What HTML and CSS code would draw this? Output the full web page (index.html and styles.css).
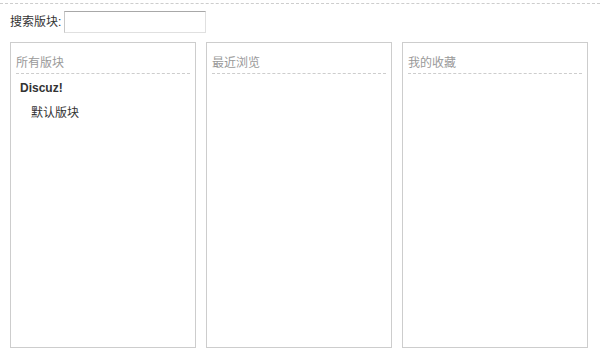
FILE: index.html
```html
<!DOCTYPE html>
<html lang="zh-CN">
  <head>
    <meta charset="UTF-8" />
    <title>选择版块</title>
    <link rel="stylesheet" href="styles.css">
  </head>
  <body>
    <div class="topline"></div>

    <div class="search">
      <label for="srchforum">搜索版块:</label>
      <input type="text" id="srchforum" class="px" />
    </div>

    <div class="columns">
      <div class="col">
        <h3>所有版块</h3>
        <ul class="forums">
          <li class="group">Discuz!</li>
          <li class="sub">默认版块</li>
        </ul>
      </div>
      <div class="col">
        <h3>最近浏览</h3>
        <ul class="forums"></ul>
      </div>
      <div class="col">
        <h3>我的收藏</h3>
        <ul class="forums"></ul>
      </div>
    </div>
  </body>
</html>
```

FILE: styles.css
```css
body {
  margin: 0;
  background-color: #fff;
  color: #333;
  font: 12px/1.5 "Liberation Sans", "Noto Sans CJK SC", sans-serif;
}

.topline {
  height: 3px;
  border-bottom: 1px dashed #cdcdcd;
}

.search {
  display: flex;
  align-items: center;
  padding: 7px 10px 0;
}

.search label {
  margin-right: 3px;
}

.px {
  width: 136px;
  height: 20px;
  margin: 0;
  padding: 0 2px;
  box-sizing: content-box;
  border: 1px solid;
  border-color: #a8a8a8 #e0e0e0 #e0e0e0 #c8c8c8;
  background-color: #fff;
  font: inherit;
}

.columns {
  display: flex;
  gap: 10px;
  margin-top: 9px;
  padding: 0 10px;
}

.col {
  width: 186px;
  height: 306px;
  box-sizing: border-box;
  padding: 0 5px;
  border: 1px solid #cdcdcd;
}

.col h3 {
  margin: 9px 0 0;
  padding-top: 2px;
  line-height: 19px;
  font-size: 12px;
  font-weight: normal;
  color: #999;
  border-bottom: 1px dashed #cdcdcd;
}

.forums {
  list-style: none;
  margin: 2px 0 0;
  padding: 0;
}

.forums li {
  line-height: 25px;
  padding-left: 4px;
}

.forums .group {
  font-weight: bold;
}

.forums .sub {
  padding-left: 15px;
}
```
